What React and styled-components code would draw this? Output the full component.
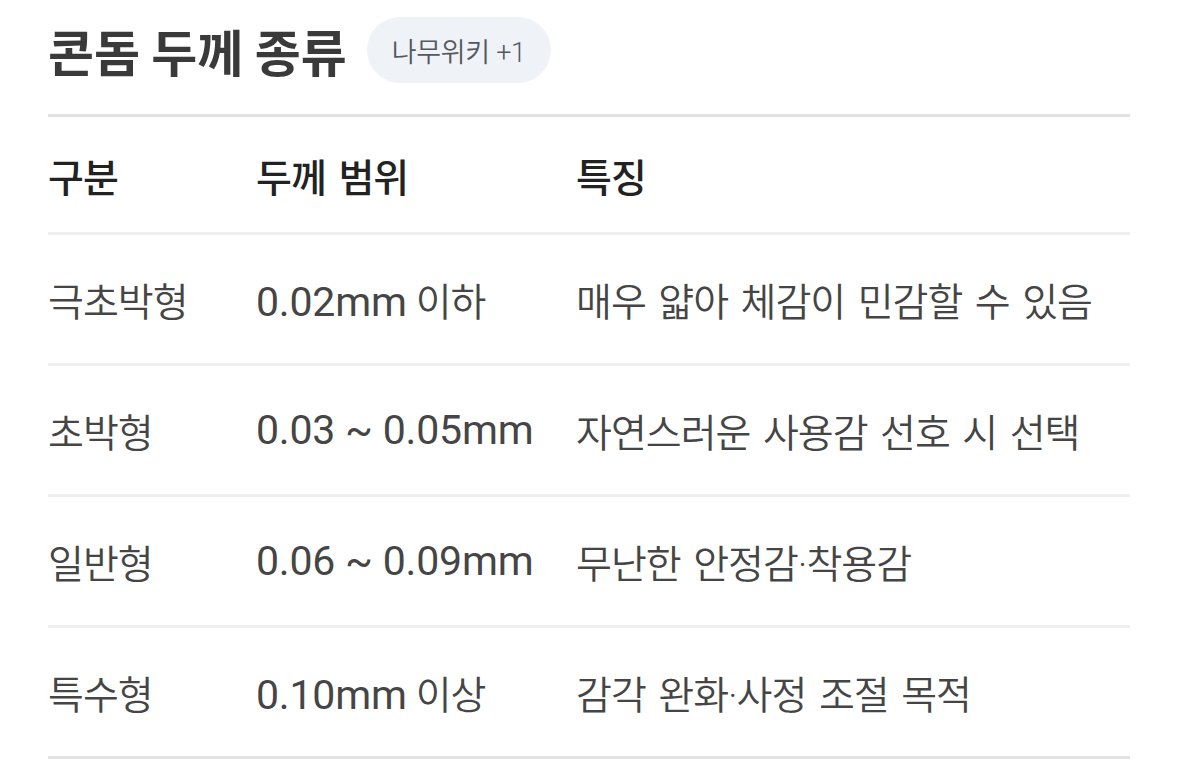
import React from "react";
import styled, { createGlobalStyle } from "styled-components";

const GlobalStyle = createGlobalStyle`
  body {
    margin: 0;
    background: #ffffff;
    font-family: Roboto, "Noto Sans CJK KR", sans-serif;
  }
`;

const Page = styled.div`
  width: 1082px;
  padding: 17px 0 0 48px;
`;

const TitleRow = styled.div`
  display: flex;
  align-items: center;
  gap: 20px;
  height: 66px;
`;

const Title = styled.h2`
  margin: 0;
  font-family: "Noto Sans CJK KR", sans-serif;
  font-size: 50px;
  font-weight: 700;
  color: #3a3a3a;
  letter-spacing: 0;
  line-height: 1;
`;

const Badge = styled.span`
  display: inline-flex;
  align-items: center;
  height: 66px;
  padding: 0 25px;
  border-radius: 33px;
  background: #eff3f8;
  color: #55595f;
  font-family: Roboto, "Noto Sans CJK KR", sans-serif;
  font-size: 27px;
  font-weight: 350;
  letter-spacing: -0.3px;
`;

const Table = styled.div`
  margin-top: 31px;
  border-top: 3px solid #e2e2e2;
  border-bottom: 3px solid #e2e2e2;
`;

const Row = styled.div`
  display: grid;
  grid-template-columns: 208px 320px 1fr;
  align-items: center;
  height: ${(p) => (p.$head ? "115px" : "128px")};
  border-bottom: 3px solid #efefef;
  &:last-child {
    border-bottom: none;
  }
`;

const Cell = styled.div`
  font-size: 39px;
  letter-spacing: -1px;
  word-spacing: 4px;
  font-weight: ${(p) => (p.$head ? 500 : 350)};
  color: ${(p) => (p.$head ? "#222222" : "#454545")};
  white-space: nowrap;
`;

const Num = styled.span`
  font-family: Roboto, sans-serif;
  font-size: 41px;
  font-weight: 400;
  letter-spacing: -0.2px;
  word-spacing: 0;
  margin-right: ${(p) => (p.$gap ? "9px" : "0")};
`;

const rows = [
  { type: "극초박형", num: "0.02mm", tail: "이하", note: "매우 얇아 체감이 민감할 수 있음" },
  { type: "초박형", num: "0.03 ~ 0.05mm", tail: "", note: "자연스러운 사용감 선호 시 선택" },
  { type: "일반형", num: "0.06 ~ 0.09mm", tail: "", note: "무난한 안정감·착용감" },
  { type: "특수형", num: "0.10mm", tail: "이상", note: "감각 완화·사정 조절 목적" },
];

export default function App() {
  return (
    <>
      <GlobalStyle />
      <Page>
        <TitleRow>
          <Title>콘돔 두께 종류</Title>
          <Badge>나무위키 +1</Badge>
        </TitleRow>
        <Table>
          <Row $head>
            <Cell $head>구분</Cell>
            <Cell $head>두께 범위</Cell>
            <Cell $head>특징</Cell>
          </Row>
          {rows.map((r) => (
            <Row key={r.type}>
              <Cell>{r.type}</Cell>
              <Cell>
                <Num $gap={!!r.tail}>{r.num}</Num>
                {r.tail}
              </Cell>
              <Cell>{r.note}</Cell>
            </Row>
          ))}
        </Table>
      </Page>
    </>
  );
}
